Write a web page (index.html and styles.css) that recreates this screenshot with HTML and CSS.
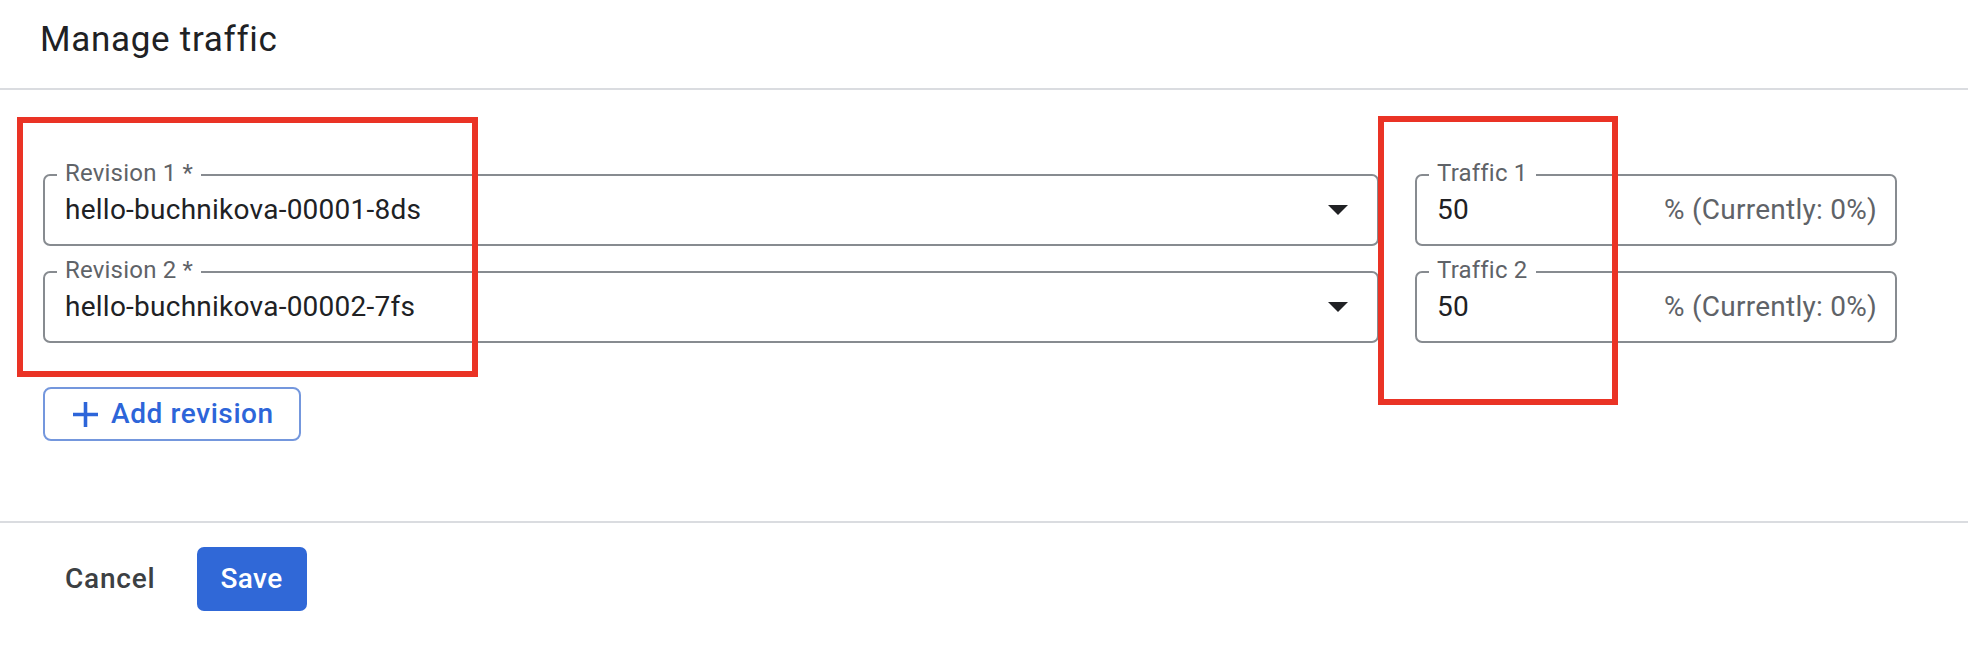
FILE: index.html
```html
<!DOCTYPE html>
<html lang="en">
<head>
<meta charset="utf-8">
<title>Manage traffic</title>
<link rel="stylesheet" href="styles.css">
</head>
<body>
<div class="dialog">
  <header class="dlg-header">
    <h1 class="title">Manage traffic</h1>
  </header>
  <section class="dlg-body">
    <div class="rows">
      <div class="field select">
        <span class="flabel">Revision 1 *</span>
        <span class="value">hello-buchnikova-00001-8ds</span>
        <span class="arrow"></span>
      </div>
      <div class="field traffic">
        <span class="flabel">Traffic 1</span>
        <span class="value">50</span>
        <span class="suffix">% (Currently: 0%)</span>
      </div>
      <div class="field select">
        <span class="flabel">Revision 2 *</span>
        <span class="value">hello-buchnikova-00002-7fs</span>
        <span class="arrow"></span>
      </div>
      <div class="field traffic">
        <span class="flabel">Traffic 2</span>
        <span class="value">50</span>
        <span class="suffix">% (Currently: 0%)</span>
      </div>
    </div>
    <button class="btn-outline" type="button">
      <svg class="plus" viewBox="5 5 14 14" width="25" height="25" aria-hidden="true"><path d="M19 13h-6v6h-2v-6H5v-2h6V5h2v6h6v2z" fill="currentColor"/></svg>
      <span>Add revision</span>
    </button>
  </section>
  <footer class="dlg-footer">
    <button class="btn-text" type="button">Cancel</button>
    <button class="btn-primary" type="button">Save</button>
  </footer>
  <div class="annot annot-rev"></div>
  <div class="annot annot-traffic"></div>
</div>
</body>
</html>
```
FILE: styles.css
```css
* { box-sizing: border-box; }
html, body { margin: 0; padding: 0; background: #fff; }
body {
  font-family: Roboto, "Liberation Sans", Arial, sans-serif;
  color: #202124;
  width: 1968px;
  height: 650px;
  overflow: hidden;
}
.dialog { position: relative; width: 1968px; height: 650px; }

.dlg-header {
  height: 90px;
  padding: 20px 0 0 40px;
  border-bottom: 2px solid #dadce0;
}
.title {
  margin: 0;
  font-size: 35px;
  line-height: 40px;
  font-weight: 400;
  letter-spacing: 0.7px;
  color: #202124;
}

.dlg-body {
  padding: 84px 0 80px 0;
}
.rows {
  display: grid;
  grid-template-columns: 1fr 482px;
  column-gap: 36px;
  row-gap: 25px;
  padding: 0 71px 0 43px;
}
.field {
  position: relative;
  height: 72px;
  border: 2px solid #878b90;
  border-radius: 7px;
  display: flex;
  align-items: center;
  padding: 0 18px 0 20px;
}
.flabel {
  position: absolute;
  left: 12px;
  top: -15px;
  padding: 0 8px;
  background: #fff;
  font-size: 24px;
  line-height: 24px;
  letter-spacing: 0.2px;
  color: #5f6368;
  white-space: nowrap;
}
.value {
  flex: 1;
  font-size: 28px;
  line-height: 28px;
  letter-spacing: 0.25px;
  color: #202124;
  white-space: nowrap;
}
.select { padding-right: 29px; }
.arrow {
  width: 0;
  height: 0;
  border-left: 10px solid transparent;
  border-right: 10px solid transparent;
  border-top: 10px solid #202124;
}
.suffix {
  font-size: 28px;
  line-height: 28px;
  letter-spacing: 0.25px;
  color: #5f6368;
  white-space: nowrap;
}

.btn-outline {
  margin: 44px 0 0 43px;
  height: 54px;
  width: 258px;
  border: 2px solid #7497dd;
  border-radius: 8px;
  background: #fff;
  color: #2d65d9;
  display: flex;
  align-items: center;
  padding: 0 0 0 28px;
  gap: 13px;
  font-family: Roboto, "Liberation Sans", Arial, sans-serif;
  font-size: 28px;
  font-weight: 500;
  letter-spacing: 0.6px;
  line-height: 28px;
  cursor: pointer;
}
.plus { display: block; flex: none; }

.dlg-footer {
  border-top: 2px solid #dadce0;
  padding: 24px 0 0 43px;
  display: flex;
  align-items: center;
  gap: 19px;
}
.btn-text, .btn-primary {
  font-family: Roboto, "Liberation Sans", Arial, sans-serif;
  font-size: 28px;
  font-weight: 500;
  line-height: 28px;
  border: none;
  cursor: pointer;
}
.btn-text {
  background: transparent;
  color: #3c4043;
  padding: 0 22px;
  height: 64px;
  letter-spacing: 0.8px;
}
.btn-primary {
  background: #3068d7;
  color: #fff;
  width: 110px;
  height: 64px;
  border-radius: 7px;
  padding: 0;
  letter-spacing: 0.4px;
}

.annot {
  position: absolute;
  border: 6px solid #ea3325;
  pointer-events: none;
}
.annot-rev { left: 17px; top: 117px; width: 461px; height: 260px; }
.annot-traffic { left: 1378px; top: 116px; width: 240px; height: 289px; }
```
